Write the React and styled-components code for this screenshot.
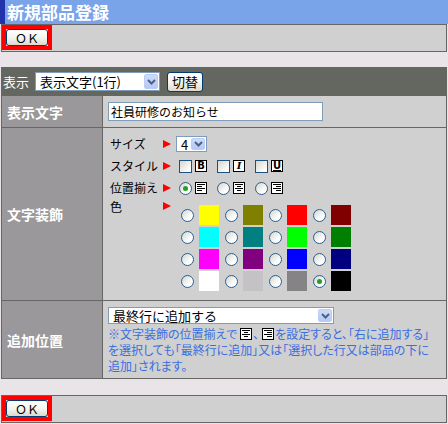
import styled, { createGlobalStyle } from "styled-components";

const GlobalStyle = createGlobalStyle`
  html, body {
    margin: 0;
    padding: 0;
    background: #e8e4e8;
  }
  body {
    font-family: "Noto Sans CJK JP", "Liberation Sans", sans-serif;
    font-size: 12px;
    color: #000;
  }
  * {
    box-sizing: border-box;
  }
`;

const COLORS = [
  ["#ffff00", "#808000", "#ff0000", "#800000"],
  ["#00ffff", "#008080", "#00ff00", "#008000"],
  ["#ff00ff", "#800080", "#0000ff", "#000080"],
  ["#ffffff", "#c4c2c4", "#858385", "#000000"],
];

function Chevron() {
  return (
    <svg width="9" height="6" viewBox="0 0 9 6">
      <path d="M1 1 L4.5 4.5 L8 1" stroke="#4d6185" strokeWidth="2" fill="none" />
    </svg>
  );
}

function AlignIcon({ align }) {
  const rows = [
    [8, 8],
    [5, 4],
    [8, 8],
    [5, 4],
  ];
  return (
    <svg width="12" height="12" viewBox="0 0 12 12" style={{ flex: "none" }}>
      <rect x="0.5" y="0.5" width="11" height="11" fill="#fff" stroke="#000" />
      {rows.map((r, i) => {
        const w = align === "center" ? r[1] : r[0];
        const x = align === "left" ? 2 : align === "right" ? 10 - w : 6 - w / 2;
        return <rect key={i} x={x} y={2 + i * 2} width={w} height="1" fill="#000" />;
      })}
    </svg>
  );
}

function Select({ text, w, h }) {
  return (
    <SelectBox $w={w} $h={h}>
      <SelectText>{text}</SelectText>
      <SelectArrow>
        <Chevron />
      </SelectArrow>
    </SelectBox>
  );
}

function App() {
  return (
    <>
      <GlobalStyle />
      <Page>
        <TitleBar>新規部品登録</TitleBar>
        <ButtonBox>
          <Highlight>
            <XpButton $w={42} $h={17}>ＯＫ</XpButton>
          </Highlight>
        </ButtonBox>

        <Toolbar>
          <ToolLabel>表示</ToolLabel>
          <ToolSelect>
            <Select text="表示文字(1行)" w={125} h={19} />
          </ToolSelect>
          <XpButton $w={36} $h={20} $size={13}>切替</XpButton>
        </Toolbar>

        <FormTable>
          <LabelCell>表示文字</LabelCell>
          <ValueCell $pad="0 0 0 5px" $center>
            <TextInput defaultValue="社員研修のお知らせ" />
          </ValueCell>

          <LabelCell>文字装飾</LabelCell>
          <ValueCell $pad="5px 0 8px 7px">
            <DecoRow>
              <DecoLabel>サイズ</DecoLabel>
              <Pointer />
              <Controls>
                <Select text="4" w={31} h={16} />
              </Controls>
            </DecoRow>
            <DecoRow>
              <DecoLabel>スタイル</DecoLabel>
              <Pointer />
              <Controls>
                <OptionGroup>
                  <CheckBox />
                  <FormatIcon>B</FormatIcon>
                </OptionGroup>
                <OptionGroup>
                  <CheckBox />
                  <FormatIcon $italic>I</FormatIcon>
                </OptionGroup>
                <OptionGroup>
                  <CheckBox />
                  <FormatIcon $underline>U</FormatIcon>
                </OptionGroup>
              </Controls>
            </DecoRow>
            <DecoRow>
              <DecoLabel>位置揃え</DecoLabel>
              <Pointer />
              <Controls>
                <OptionGroup>
                  <Radio $checked />
                  <AlignIcon align="left" />
                </OptionGroup>
                <OptionGroup>
                  <Radio />
                  <AlignIcon align="center" />
                </OptionGroup>
                <OptionGroup>
                  <Radio />
                  <AlignIcon align="right" />
                </OptionGroup>
              </Controls>
            </DecoRow>
            <DecoRow $top>
              <DecoLabel>色</DecoLabel>
              <Pointer $top />
              <ColorGrid>
                {COLORS.flat().map((c, i) => (
                  <ColorCell key={i}>
                    <Radio $checked={i === 15} />
                    <Swatch $color={c} />
                  </ColorCell>
                ))}
              </ColorGrid>
            </DecoRow>
          </ValueCell>

          <LabelCell>追加位置</LabelCell>
          <ValueCell $pad="6px 0 0 5px">
            <Select text="最終行に追加する" w={226} h={17} />
            <Note>
              ※文字装飾の位置揃えで
              <InlineIcon>
                <AlignIcon align="center" />
              </InlineIcon>
              、
              <InlineIcon>
                <AlignIcon align="right" />
              </InlineIcon>
              を設定すると、「右に追加する」
              <br />
              を選択しても「最終行に追加」又は「選択した行又は部品の下に
              <br />
              追加」されます。
            </Note>
          </ValueCell>
        </FormTable>

        <ButtonBox $mt={16}>
          <Highlight>
            <XpButton $w={42} $h={17}>ＯＫ</XpButton>
          </Highlight>
        </ButtonBox>
      </Page>
    </>
  );
}

const Page = styled.div`
  width: 448px;
  height: 424px;
  overflow: hidden;
`;

const TitleBar = styled.div`
  height: 24px;
  background: #7aa4ea;
  border-left: 5px solid #2233aa;
  padding-left: 2px;
  color: #fff;
  font-size: 17px;
  font-weight: bold;
  line-height: 24px;
  white-space: nowrap;
`;

const ButtonBox = styled.div`
  display: flex;
  align-items: flex-start;
  height: 28px;
  margin: ${({ $mt }) => $mt || 0}px 1px 0;
  border: 1px solid #666;
  background: #d0d0d0;
`;

const Highlight = styled.span`
  display: inline-flex;
  border: 4px solid #ff0000;
`;

const XpButton = styled.button`
  display: inline-flex;
  align-items: center;
  justify-content: center;
  width: ${({ $w }) => $w}px;
  height: ${({ $h }) => $h}px;
  padding: 0;
  border: 1px solid #003c74;
  border-radius: 3px;
  background: linear-gradient(#ffffff, #f4f3ee 55%, #dcd8cc);
  font-family: "Noto Sans CJK JP", "Liberation Sans", sans-serif;
  font-size: ${({ $size }) => $size || 12}px;
  line-height: 1;
  color: #000;
`;

const Toolbar = styled.div`
  display: flex;
  align-items: center;
  height: 29px;
  margin: 15px 1px 0;
  padding-left: 2px;
  background: #646660;
  color: #fff;
  font-size: 13px;
`;

const ToolLabel = styled.span`
  line-height: 1;
`;

const ToolSelect = styled.div`
  margin: 0 7px 0 6px;
`;

const SelectBox = styled.div`
  display: flex;
  align-items: stretch;
  width: ${({ $w }) => $w}px;
  height: ${({ $h }) => $h}px;
  padding: 1px;
  border: 1px solid #7f9db9;
  background: #fff;
  color: #000;
  font-size: 13px;
`;

const SelectText = styled.span`
  flex: 1;
  display: flex;
  align-items: center;
  padding-left: 3px;
  line-height: 1;
  white-space: nowrap;
`;

const SelectArrow = styled.span`
  display: flex;
  align-items: center;
  justify-content: center;
  width: 14px;
  border: 1px solid #bccdf5;
  border-radius: 2px;
  background: linear-gradient(#cddcfc, #b4c9f6);
`;

const FormTable = styled.div`
  display: grid;
  grid-template-columns: 100px 1fr;
  grid-template-rows: 31px 172px 77px;
  gap: 1px;
  margin: 0 1px;
  border: 1px solid #666;
  border-top: 0;
  background: #666;
`;

const LabelCell = styled.div`
  display: flex;
  align-items: center;
  padding-left: 5px;
  background: #9a989a;
  color: #fff;
  font-size: 14px;
  font-weight: bold;
`;

const ValueCell = styled.div`
  display: flex;
  flex-direction: ${({ $center }) => ($center ? "row" : "column")};
  align-items: ${({ $center }) => ($center ? "center" : "stretch")};
  padding: ${({ $pad }) => $pad};
  background: #d0d0d0;
  overflow: hidden;
`;

const TextInput = styled.input`
  width: 215px;
  height: 19px;
  padding: 0 0 0 2px;
  border: 1px solid #7f9db9;
  background: #fff;
  font-family: "Noto Sans CJK JP", "Liberation Sans", sans-serif;
  font-size: 12px;
  color: #000;
  outline: none;
`;

const DecoRow = styled.div`
  display: grid;
  grid-template-columns: 53px 13px 1fr;
  align-items: ${({ $top }) => ($top ? "start" : "center")};
  height: ${({ $top }) => ($top ? "auto" : "22px")};
`;

const DecoLabel = styled.span`
  font-size: 12px;
  line-height: 16px;
  white-space: nowrap;
`;

const Pointer = styled.span`
  width: 0;
  height: 0;
  margin-top: ${({ $top }) => ($top ? 3 : 0)}px;
  border-left: 8px solid #ff0000;
  border-top: 4.5px solid transparent;
  border-bottom: 4.5px solid transparent;
`;

const Controls = styled.div`
  display: flex;
  align-items: center;
`;

const OptionGroup = styled.span`
  display: flex;
  align-items: center;
  gap: 3px;
  margin-right: 10px;
  &:first-child {
    margin-left: 3px;
  }
`;

const CheckBox = styled.span`
  width: 13px;
  height: 13px;
  border: 1px solid #1c5180;
  background: linear-gradient(135deg, #d6d6ce, #ffffff 85%);
`;

const Radio = styled.span`
  position: relative;
  flex: none;
  width: 13px;
  height: 13px;
  border: 1px solid #2f5f8c;
  border-radius: 50%;
  background: linear-gradient(135deg, #d4d4cc, #ffffff 70%);
  &::after {
    content: "";
    display: ${({ $checked }) => ($checked ? "block" : "none")};
    position: absolute;
    left: 3px;
    top: 3px;
    width: 5px;
    height: 5px;
    border-radius: 50%;
    background: #21a121;
  }
`;

const FormatIcon = styled.span`
  display: inline-flex;
  align-items: center;
  justify-content: center;
  width: 12px;
  height: 12px;
  border: 1px solid #000;
  background: #fff;
  font-family: ${({ $italic }) => ($italic ? '"DejaVu Serif", serif' : '"DejaVu Sans", sans-serif')};
  font-size: 10px;
  font-weight: bold;
  font-style: ${({ $italic }) => ($italic ? "italic" : "normal")};
  text-decoration: ${({ $underline }) => ($underline ? "underline" : "none")};
  line-height: 1;
`;

const ColorGrid = styled.div`
  display: grid;
  grid-template-columns: repeat(4, 44px);
  grid-auto-rows: 22px;
  margin-top: 5px;
`;

const ColorCell = styled.div`
  display: flex;
  align-items: center;
  gap: 5px;
  padding-left: 5px;
`;

const Swatch = styled.span`
  width: 20px;
  height: 20px;
  background: ${({ $color }) => $color};
`;

const Note = styled.div`
  margin-top: 2px;
  color: #3a6ee0;
  font-size: 12px;
  line-height: 16px;
  white-space: nowrap;
  font-feature-settings: "palt";
`;

const InlineIcon = styled.span`
  display: inline-flex;
  vertical-align: -1px;
  margin: 0 1px 0 3px;
`;

export default App;
